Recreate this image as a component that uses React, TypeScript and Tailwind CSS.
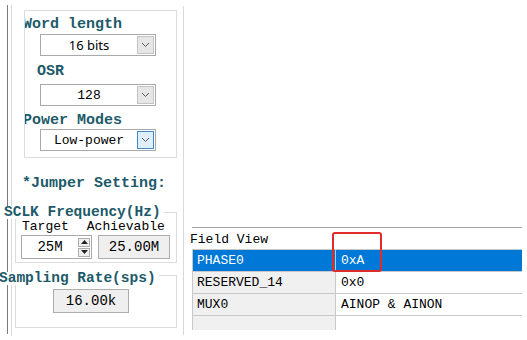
import React from 'react';

const MONO = "font-['Liberation_Mono','DejaVu_Sans_Mono',monospace]";

function Chevron() {
  return (
    <svg width="9" height="6" viewBox="0 0 9 6">
      <polyline points="1,1 4.5,4.5 8,1" fill="none" stroke="#5a5a5a" strokeWidth="1" />
    </svg>
  );
}

function Select({ value, sans, active }: { value: string; sans?: boolean; active?: boolean }) {
  return (
    <div className="flex h-[22px] w-[116px] items-center border border-[#a9a9a9] bg-white">
      <div
        className={
          'flex-1 text-center text-[13px] leading-none text-black ' +
          (sans ? "font-['Noto_Sans',sans-serif]" : MONO)
        }
      >
        {value}
      </div>
      <div
        className={
          'mr-[1px] flex h-[18px] w-[17px] items-center justify-center border ' +
          (active ? 'border-[#3d89cc] bg-[#dfeefb]' : 'border-[#c4c4c4] bg-[#e6e6e6]')
        }
      >
        <Chevron />
      </div>
    </div>
  );
}

function Label({ children, className }: { children: React.ReactNode; className?: string }) {
  return (
    <div className={'whitespace-nowrap text-[15px] font-bold leading-[16px] text-[#1d5a69] ' + (className ?? '')}>
      {children}
    </div>
  );
}

function Caption({ children, className }: { children: React.ReactNode; className?: string }) {
  return (
    <div
      className={
        'absolute whitespace-nowrap bg-white pr-[3px] text-[14.5px] font-bold leading-[13px] text-[#1d5a69] ' +
        (className ?? '')
      }
    >
      {children}
    </div>
  );
}

const rows = [
  { name: 'PHASE0', value: '0xA', selected: true },
  { name: 'RESERVED_14', value: '0x0' },
  { name: 'MUX0', value: 'AINOP & AINON' },
  { name: '', value: '' },
];

export default function App() {
  return (
    <div className={'relative flex h-[340px] w-[527px] overflow-hidden bg-white text-black ' + MONO}>
      {/* left border lines */}
      <div className="w-[7px]" />
      <div className="mt-[5px] h-[329px] w-px bg-[#7b7b7b]" />
      <div className="w-[3px]" />
      <div className="mt-[5px] h-[331px] w-px bg-[#d9d9d9]" />

      {/* settings column */}
      <div className="relative w-[171px]">
        <div className="ml-[12px] mt-[10px] h-[148px] w-[153px] overflow-hidden border border-[#dcdcdc]">
          <Label className="-ml-[2px] mt-[6px]">Word length</Label>
          <div className="ml-[15px] mt-[1px]">
            <Select value="16 bits" sans />
          </div>
          <Label className="ml-[12px] mt-[8px]">OSR</Label>
          <div className="ml-[15px] mt-[4px]">
            <Select value="128" />
          </div>
          <Label className="-ml-[2px] mt-[7px]">Power Modes</Label>
          <div className="ml-[15px]">
            <Select value="Low-power" active />
          </div>
        </div>

        <Label className="ml-[10px] mt-[18px]">*Jumper Setting:</Label>

        {/* SCLK group */}
        <div className="relative ml-[3px] mt-[20px] h-[51px] w-[162px] border border-[#dcdcdc]">
          <Caption className="left-[-12px] top-[-7px]">SCLK Frequency(Hz)</Caption>
          <div className="flex pl-[6px] pt-[7px] text-[13px] leading-[13px]">
            <span>Target</span>
            <span className="ml-[18px]">Achievable</span>
          </div>
          <div className="ml-[5px] mt-[2px] flex">
            <div className="flex h-[24px] w-[71px] items-center border border-[#a9a9a9] bg-white">
              <div className="flex-1 text-center text-[14px] leading-none">25M</div>
              <div className="mr-[1px] flex flex-col gap-[1px]">
                <div className="flex h-[9px] w-[12px] items-center justify-center border border-[#adadad] bg-[#f0f0f0]">
                  <svg width="7" height="4" viewBox="0 0 7 4">
                    <polygon points="0,4 3.5,0 7,4" fill="#222" />
                  </svg>
                </div>
                <div className="flex h-[9px] w-[12px] items-center justify-center border border-[#adadad] bg-[#f0f0f0]">
                  <svg width="7" height="4" viewBox="0 0 7 4">
                    <polygon points="0,0 3.5,4 7,0" fill="#222" />
                  </svg>
                </div>
              </div>
            </div>
            <div className="ml-[6px] flex h-[24px] w-[72px] items-center justify-center border border-[#adadad] bg-[#efefef] text-[14px] leading-none">
              25.00M
            </div>
          </div>
        </div>

        {/* Sampling group */}
        <div className="relative ml-[3px] mt-[12px] h-[53px] w-[162px] border border-[#dcdcdc]">
          <Caption className="left-[-17px] top-[-4px]">Sampling Rate(sps)</Caption>
          <div className="ml-[37px] mt-[13px] flex h-[24px] w-[76px] items-center justify-center border border-[#adadad] bg-[#efefef] text-[14px] leading-none">
            16.00k
          </div>
        </div>
      </div>

      <div className="mt-[6px] h-[329px] w-px bg-[#d9d9d9]" />

      {/* right area */}
      <div className="flex-1">
        <div className="ml-[8px] mt-[227px] h-px w-[330px] bg-[#a3a3a3]" />
        <div className="ml-[6px] mt-[5px] text-[13px] leading-[14px]">Field View</div>
        <div className="ml-[8px] mt-[2px] h-[81px] w-[330px] overflow-hidden border-l border-t border-[#c8c8c8]">
          {rows.map((r, i) => (
            <div key={i} className="flex h-[22px] border-b border-[#c8c8c8] text-[13px]">
              <div
                className={
                  'flex w-[142px] items-center pl-[4px] ' +
                  (r.selected ? 'bg-[#0078d7] text-white' : 'bg-[#f0f0f0]')
                }
              >
                {r.name}
              </div>
              <div className="w-px bg-[#c8c8c8]" />
              <div
                className={
                  'flex flex-1 items-center pl-[5px] ' + (r.selected ? 'bg-[#0078d7] text-white' : 'bg-white')
                }
              >
                {r.value}
              </div>
            </div>
          ))}
        </div>
      </div>

      {/* red highlight */}
      <div className="absolute left-[332px] top-[232px] h-[40px] w-[50px] rounded-[3px] border-[2.5px] border-[#e02b2b]" />
    </div>
  );
}
